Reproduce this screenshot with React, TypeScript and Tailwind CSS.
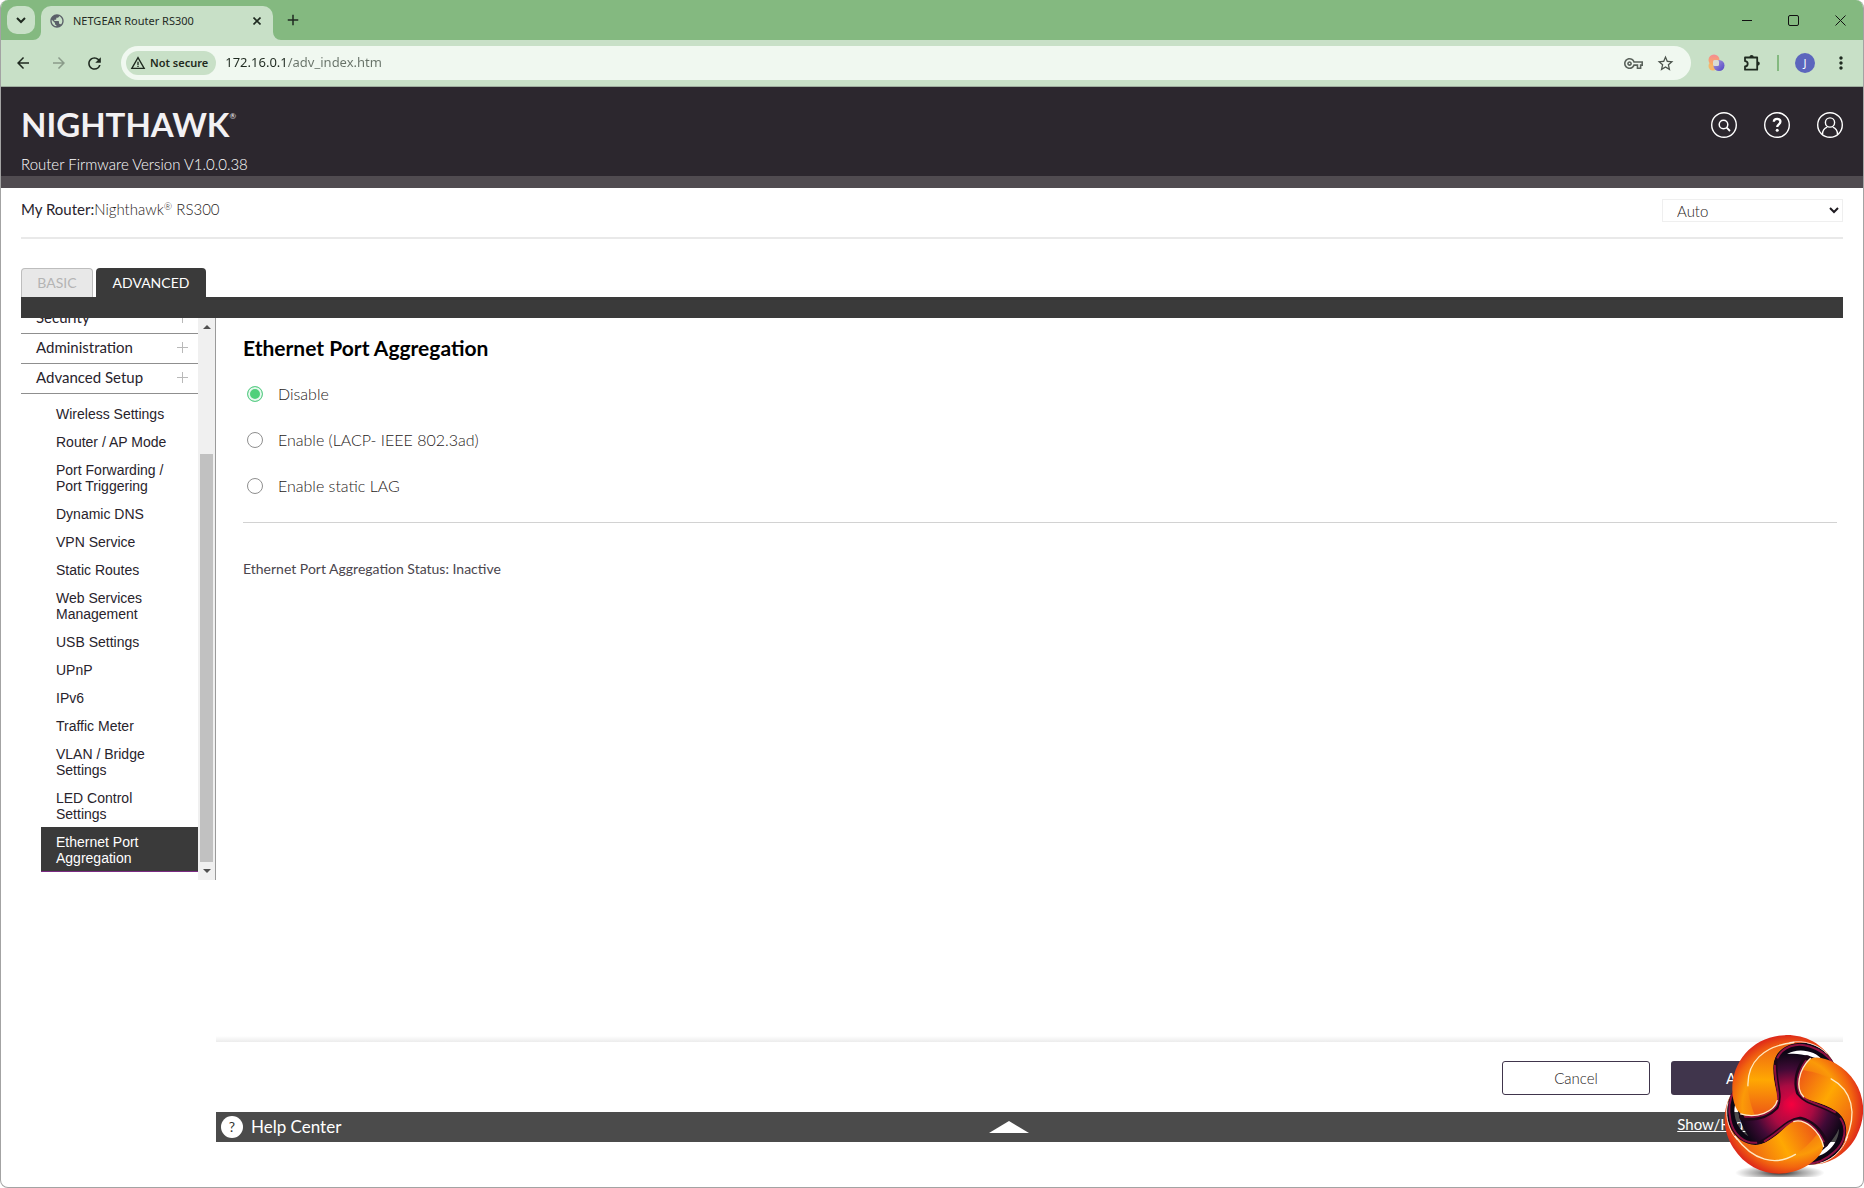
import React from "react";
import {
  MdArrowBack,
  MdArrowForward,
  MdRefresh,
  MdWarningAmber,
  MdPublic,
  MdOutlineVpnKey,
  MdStarBorder,
  MdMoreVert,
  MdAdd,
} from "react-icons/md";

const sections = ["Security", "Administration", "Advanced Setup"];

const links: string[][] = [
  ["Wireless Settings"],
  ["Router / AP Mode"],
  ["Port Forwarding /", "Port Triggering"],
  ["Dynamic DNS"],
  ["VPN Service"],
  ["Static Routes"],
  ["Web Services", "Management"],
  ["USB Settings"],
  ["UPnP"],
  ["IPv6"],
  ["Traffic Meter"],
  ["VLAN / Bridge", "Settings"],
  ["LED Control", "Settings"],
  ["Ethernet Port", "Aggregation"],
];

const modes = ["Disable", "Enable (LACP- IEEE 802.3ad)", "Enable static LAG"];

function TabStrip() {
  return (
    <div className="flex h-10 items-start bg-[#84b980] pt-1.5 pl-1.5">
      <button aria-label="Search tabs" className="flex size-7 items-center justify-center rounded-[10px] bg-[#c8e0c7]">
        <svg width="10" height="7" viewBox="0 0 10 7" fill="none" stroke="#1f2a20" strokeWidth="2">
          <path d="M1 1l4 4 4-4" />
        </svg>
      </button>
      <svg width="8" height="34" viewBox="0 0 8 34" className="-ml-0.5" fill="#c8e0c7">
        <path d="M8 26v8H0a8 8 0 0 0 8-8z" />
      </svg>
      <div className="flex h-[34px] w-[232px] items-center rounded-t-[10px] bg-[#c8e0c7] pr-2 pb-1 pl-2">
        <MdPublic size={16} color="#5b6069" />
        <span className="ml-2 flex-1 font-['Noto_Sans'] text-[11px] leading-4 text-[#242b25]">NETGEAR Router RS300</span>
        <button aria-label="Close tab" className="flex size-4 items-center justify-center">
          <svg width="8" height="8" viewBox="0 0 8 8" stroke="#1f2a20" strokeWidth="1.600">
            <path d="M.5.5l7 7M7.500.5l-7 7" />
          </svg>
        </button>
      </div>
      <svg width="8" height="34" viewBox="0 0 8 34" fill="#c8e0c7">
        <path d="M0 26v8h8a8 8 0 0 1-8-8z" />
      </svg>
      <button aria-label="New tab" className="ml-1 flex h-7 w-4 items-center justify-center text-[#1f2a20]">
        <MdAdd size={18} className="shrink-0" />
      </button>
      <div className="ml-auto flex h-7 items-center gap-9 pr-[17px]">
        <button aria-label="Minimize">
          <svg width="10" height="10" stroke="#111"><path d="M0 5.500h10" /></svg>
        </button>
        <button aria-label="Maximize">
          <svg width="11" height="11" fill="none" stroke="#111"><rect x=".5" y=".5" width="10" height="10" rx="1.500" /></svg>
        </button>
        <button aria-label="Close window">
          <svg width="11" height="11" stroke="#111"><path d="M.5.5l10 10M10.500.5l-10 10" /></svg>
        </button>
      </div>
    </div>
  );
}

function Toolbar() {
  return (
    <div className="flex h-[47px] items-center border-b border-[#9fae9f] bg-[#c8e0c7] pr-3 pl-[13px] text-[#1f2a20]">
      <button aria-label="Back"><MdArrowBack size={18} /></button>
      <button aria-label="Forward" className="ml-[18px] text-[#8a9b8a]"><MdArrowForward size={18} /></button>
      <button aria-label="Reload" className="ml-[17px]"><MdRefresh size={19} /></button>
      <div className="ml-[17px] flex h-[34px] flex-1 items-center rounded-full bg-[#f0f8f0] pr-4 pl-[5px]">
        <button className="flex h-6 items-center gap-1 rounded-full bg-[#c8e0c7] pr-2 pl-1 font-['Noto_Sans'] text-[11px] font-semibold">
          <MdWarningAmber size={16} />
          Not secure
        </button>
        <input
          aria-label="Address"
          defaultValue="172.16.0.1/adv_index.htm"
          className="ml-[9px] min-w-0 flex-1 bg-linear-to-r from-[#1f2a20] from-[61px] to-[#677268] to-[61px] bg-clip-text font-['Noto_Sans'] text-[13px] text-transparent outline-none"
        />
        <button aria-label="Passwords" className="text-[#5b635c]"><MdOutlineVpnKey size={19} /></button>
        <button aria-label="Bookmark" className="ml-[13px] text-[#4c544d]"><MdStarBorder size={19} /></button>
      </div>
      <button aria-label="Copilot extension" className="ml-[15px]">
        <svg width="20" height="20" viewBox="0 0 20 20">
          <defs>
            <linearGradient id="extA" x1="0" y1="0" x2="0" y2="1">
              <stop offset="0" stopColor="#f58a94" />
              <stop offset="1" stopColor="#f9b25e" />
            </linearGradient>
            <linearGradient id="extB" x1="0" y1="0" x2="1" y2="1">
              <stop offset="0" stopColor="#a99bdd" />
              <stop offset="1" stopColor="#5145c4" />
            </linearGradient>
          </defs>
          <circle cx="7" cy="13" r="4.500" fill="#f6b76a" />
          <circle cx="8" cy="7" r="5.500" fill="url(#extA)" />
          <circle cx="13" cy="12.500" r="5.500" fill="url(#extB)" />
          <rect x="7" y="7" width="6" height="6" rx="1.500" fill="#d9dcd4" />
        </svg>
      </button>
      <button aria-label="Extensions" className="ml-[17px]">
        <svg width="18" height="18" viewBox="0 0 18 18" fill="none" stroke="#1f2a20" strokeWidth="1.800" strokeLinejoin="round">
          <path d="M2 3.500h12.200v12.200H2v-3.200a2.700 2.700 0 0 0 0-5.400z" />
          <path d="M6.500 3a2.100 2.100 0 0 1 4.200 0zM14.700 7.500a2.100 2.100 0 0 1 0 4.200z" fill="#1f2a20" stroke="none" />
        </svg>
      </button>
      <span className="ml-4 h-4 w-0.5 bg-[#84b980]" />
      <button aria-label="Profile" className="ml-4 flex size-5 items-center justify-center rounded-full bg-[#5c66bd] font-['Noto_Sans'] text-[11px] text-white">
        J
      </button>
      <button aria-label="Menu" className="ml-4"><MdMoreVert size={20} /></button>
    </div>
  );
}

function Header() {
  return (
    <header className="flex h-[101px] items-start justify-between border-b-[12px] border-[#504b50] bg-[#2c272e] px-5">
      <div className="pt-[17px]">
        <div className="flex items-start text-[#f3f1f3]">
          <span className="text-[33px] leading-10 font-bold">NIGHTHAWK</span>
          <span className="mt-1.5 text-[8px] leading-3">®</span>
        </div>
        <p className="mt-2 text-[15px] leading-6 font-light text-white">Router Firmware Version V1.0.0.38</p>
      </div>
      <div className="flex gap-[27px] pt-[25px]">
        <button aria-label="Search">
          <svg width="26" height="26" viewBox="0 0 26 26" fill="none" stroke="#fff">
            <circle cx="13" cy="13" r="12.300" strokeWidth="1.400" />
            <circle cx="12.500" cy="12.500" r="4.300" strokeWidth="1.500" />
            <path d="M15.700 15.700l3.300 3.300" strokeWidth="1.800" />
          </svg>
        </button>
        <button aria-label="Help">
          <svg width="26" height="26" viewBox="0 0 26 26" fill="none" stroke="#fff">
            <circle cx="13" cy="13" r="12.300" strokeWidth="1.400" />
            <path d="M9.800 9.800C9.900 7.800 11.300 6.900 13.100 6.900c2 0 3.300 1.100 3.300 2.800 0 2.600-3.200 2.600-3.200 5.300" strokeWidth="2.300" />
            <circle cx="13.200" cy="18.300" r="1.500" fill="#fff" stroke="none" />
          </svg>
        </button>
        <button aria-label="Account">
          <svg width="26" height="26" viewBox="0 0 26 26" fill="none" stroke="#fff" strokeWidth="1.400">
            <circle cx="13" cy="13" r="12.300" />
            <circle cx="13" cy="10.500" r="4.600" />
            <path d="M5.500 22.500c0-5 3-6.700 4.700-7.300M20.500 22.500c0-5-3-6.700-4.700-7.300" />
          </svg>
        </button>
      </div>
    </header>
  );
}

function Sidebar() {
  return (
    <nav className="flex h-[562px] w-[195px] shrink-0 border-r border-[#9a9a9a] bg-white">
      <div className="min-w-0 flex-1 overflow-hidden">
        <div className="-mt-[14px]">
          {sections.map((name) => (
            <button
              key={name}
              className="flex h-[30px] w-full items-center justify-between border-b border-[#8f8f8f] pr-2.5 pb-0.5 pl-[15px] text-[15px] text-[#28232c]"
            >
              {name}
              <svg width="11" height="11" stroke="#b9b9b9"><path d="M5.500 0v11M0 5.500h11" /></svg>
            </button>
          ))}
        </div>
        <ul className="mt-[5px] pl-5 font-['Liberation_Sans'] text-sm leading-4 text-[#28232c]">
          {links.map((lines, i) => (
            <li key={lines[0]}>
              <a
                href="#"
                className={
                  i === links.length - 1
                    ? "block border-b border-[#7b2a83] bg-[#3a3a3a] pt-[7px] pb-[5px] pl-[15px] text-white"
                    : "block pt-[7px] pb-[5px] pl-[15px]"
                }
              >
                {lines.map((line) => (
                  <span key={line} className="block">{line}</span>
                ))}
              </a>
            </li>
          ))}
        </ul>
      </div>
      <div className="flex w-[17px] flex-col items-center bg-[#f0f0f0] py-[7px]">
        <svg width="8" height="4" fill="#505050"><path d="M4 0l4 4H0z" /></svg>
        <div className="mt-[125px] mb-[7px] w-[13px] flex-1 bg-[#c1c1c1]" />
        <svg width="8" height="4" fill="#505050"><path d="M0 0h8L4 4z" /></svg>
      </div>
    </nav>
  );
}

function AggregationForm() {
  return (
    <section className="h-[718px] pr-1.5 pl-[27px]">
      <h1 className="pt-4 text-[21px] leading-7 font-bold text-black">Ethernet Port Aggregation</h1>
      <div className="mt-[18px] flex flex-col pl-1">
        {modes.map((mode, i) => (
          <label key={mode} className="flex h-[46px] items-start gap-[15px] pt-1.5 text-base leading-4 font-light text-[#1f1b21]">
            <input
              type="radio"
              name="aggregation"
              defaultChecked={i === 0}
              className="size-4 shrink-0 appearance-none rounded-full border border-[#8f8f8f] bg-white checked:border-[#62cf8d] checked:bg-[#4fd07a] checked:shadow-[inset_0_0_0_2px_#e6f8ee]"
            />
            {mode}
          </label>
        ))}
      </div>
      <hr className="mt-1 border-[#d2d2d2]" />
      <p className="mt-9 text-sm leading-5 text-[#4a454d]">Ethernet Port Aggregation Status: Inactive</p>
    </section>
  );
}

const blob =
  "M512 192C480 130 420 106 365 108C270 112 207 185 207 270C207 310 220 345 245 350C290 353 335 335 342 305C345 280 328 250 330 200C333 155 375 127 425 131C465 135 495 160 512 192Z";
const turns = ["rotate(0 385 322)", "rotate(240 385 322)", "rotate(120 385 322)"];

function Watermark() {
  return (
    <svg className="pointer-events-none absolute right-0 bottom-2.5" width="143" height="144" viewBox="170 102 430 432" aria-hidden="true">
      <defs>
        <radialGradient id="core" gradientUnits="userSpaceOnUse" cx="380" cy="325" r="165">
          <stop offset="0" stopColor="#f6003f" />
          <stop offset=".4" stopColor="#a80b42" />
          <stop offset=".7" stopColor="#400a36" />
          <stop offset="1" stopColor="#0c0614" />
        </radialGradient>
        <radialGradient id="flame" gradientUnits="userSpaceOnUse" cx="385" cy="322" r="218">
          <stop offset=".3" stopColor="#ee5b15" />
          <stop offset=".68" stopColor="#fb9a08" />
          <stop offset=".84" stopColor="#f2650f" />
          <stop offset="1" stopColor="#dc231b" />
        </radialGradient>
        <linearGradient id="inner" gradientUnits="userSpaceOnUse" x1="300" y1="140" x2="295" y2="345">
          <stop offset="0" stopColor="#ee6413" />
          <stop offset=".5" stopColor="#ffa802" />
          <stop offset="1" stopColor="#ee5b15" />
        </linearGradient>
        <radialGradient id="ground">
          <stop offset="0" stopColor="#000" stopOpacity=".85" />
          <stop offset=".5" stopColor="#000" stopOpacity=".35" />
          <stop offset="1" stopColor="#000" stopOpacity="0" />
        </radialGradient>
      </defs>
      <ellipse cx="350" cy="522" rx="135" ry="24" fill="url(#ground)" />
      {turns.map((t) => (
        <g key={t} transform={t}>
          <path
            fillRule="evenodd"
            d="M516 198C480 120 375 108 330 165L325 330L385 350L440 320L410 260L425 200L440 193ZM372 165C400 147 455 150 482 187C450 173 412 160 372 165Z"
            fill="url(#core)"
          />
          <path d="M342 178C358 142 400 128 440 142C475 153 498 172 510 194" fill="none" stroke="#8d1042" strokeWidth="6" />
        </g>
      ))}
      {turns.map((t) => (
        <g key={t} transform={t} strokeLinecap="round">
          <path d="M330 190C326 250 350 285 334 322C312 345 285 356 240 352" fill="none" stroke="#1c0718" strokeWidth="26" />
          <path d="M335 200C335 255 354 290 339 320C318 348 285 356 245 353" fill="none" stroke="#8d1040" strokeWidth="6" />
          <path d={blob} fill="url(#flame)" />
          <path d="M392 130C300 140 252 190 254 260C256 300 266 325 274 348C305 348 336 333 341 305C345 280 328 250 330 200C332 160 360 136 392 130Z" fill="url(#inner)" />
          <path d="M392 130C300 140 252 190 254 260" fill="none" stroke="#ffe9c0" strokeWidth="4" />
          <path d="M232 345C280 360 334 338 342 305" fill="none" stroke="#ffe9c9" strokeWidth="4" />
          <path d="M380 130C425 120 470 140 490 162" fill="none" stroke="#fff" strokeWidth="2" />
        </g>
      ))}
    </svg>
  );
}

function Footer() {
  return (
    <footer>
      <div className="h-1.5 bg-linear-to-b from-white to-[#ececec]" />
      <div className="flex h-[70px] items-center justify-end gap-[21px] pt-0.5 pr-6">
        <button className="h-[34px] w-[148px] rounded-[3px] border border-[#40354c] bg-white text-[15px] font-light text-[#1f1b21]">Cancel</button>
        <button className="h-[34px] w-[148px] rounded-[3px] bg-[#40354c] text-[15px] text-white">Apply</button>
      </div>
      <div className="flex h-[30px] items-center justify-between bg-[#4b4b4b] text-white">
        <div className="flex items-center gap-2 pl-[5px] text-[17px]">
          <span className="flex size-[22px] items-center justify-center rounded-full bg-white text-sm text-[#333]">?</span>
          Help Center
        </div>
        <button aria-label="Expand help">
          <svg width="40" height="12" fill="#fff"><path d="M20 0l20 12H0z" /></svg>
        </button>
        <a href="#" className="mb-1.5 pr-2 text-[15px] underline">Show/Hide Help Center</a>
      </div>
    </footer>
  );
}

export default function App() {
  return (
    <div className="relative flex min-h-screen flex-col overflow-hidden rounded-lg border border-t-0 border-[#a3a3a3] bg-white font-['Lato',sans-serif]">
      <TabStrip />
      <Toolbar />
      <Header />
      <main className="px-5">
        <div className="flex h-[51px] items-start justify-between border-b-2 border-[#e9e9e9] pt-[11px]">
          <p className="text-[15px] leading-5 font-light text-[#1f1b21]">
            <span className="font-normal text-[#28232c]">My Router:</span>Nighthawk<span className="align-text-top text-[10px] leading-3">®</span> RS300
          </p>
          <select aria-label="Language" className="h-[23px] w-[181px] border border-[#efefef] bg-white pl-2.5 text-[15px] font-light text-[#1f1b21]">
            <option>Auto</option>
          </select>
        </div>
        <div className="mt-[29px] flex h-[29px] gap-[3px]">
          <button className="w-[72px] rounded-t border border-b-0 border-[#bdbdbd] bg-[#e8e8e8] text-sm text-[#b4b4b4]">BASIC</button>
          <button className="w-[110px] rounded-t bg-[#3a3a3a] text-sm text-white">ADVANCED</button>
        </div>
        <div className="h-[21px] bg-[#3a3a3a]" />
        <div className="flex items-start">
          <Sidebar />
          <div className="min-w-0 flex-1">
            <AggregationForm />
            <Footer />
          </div>
        </div>
      </main>
      <Watermark />
    </div>
  );
}
